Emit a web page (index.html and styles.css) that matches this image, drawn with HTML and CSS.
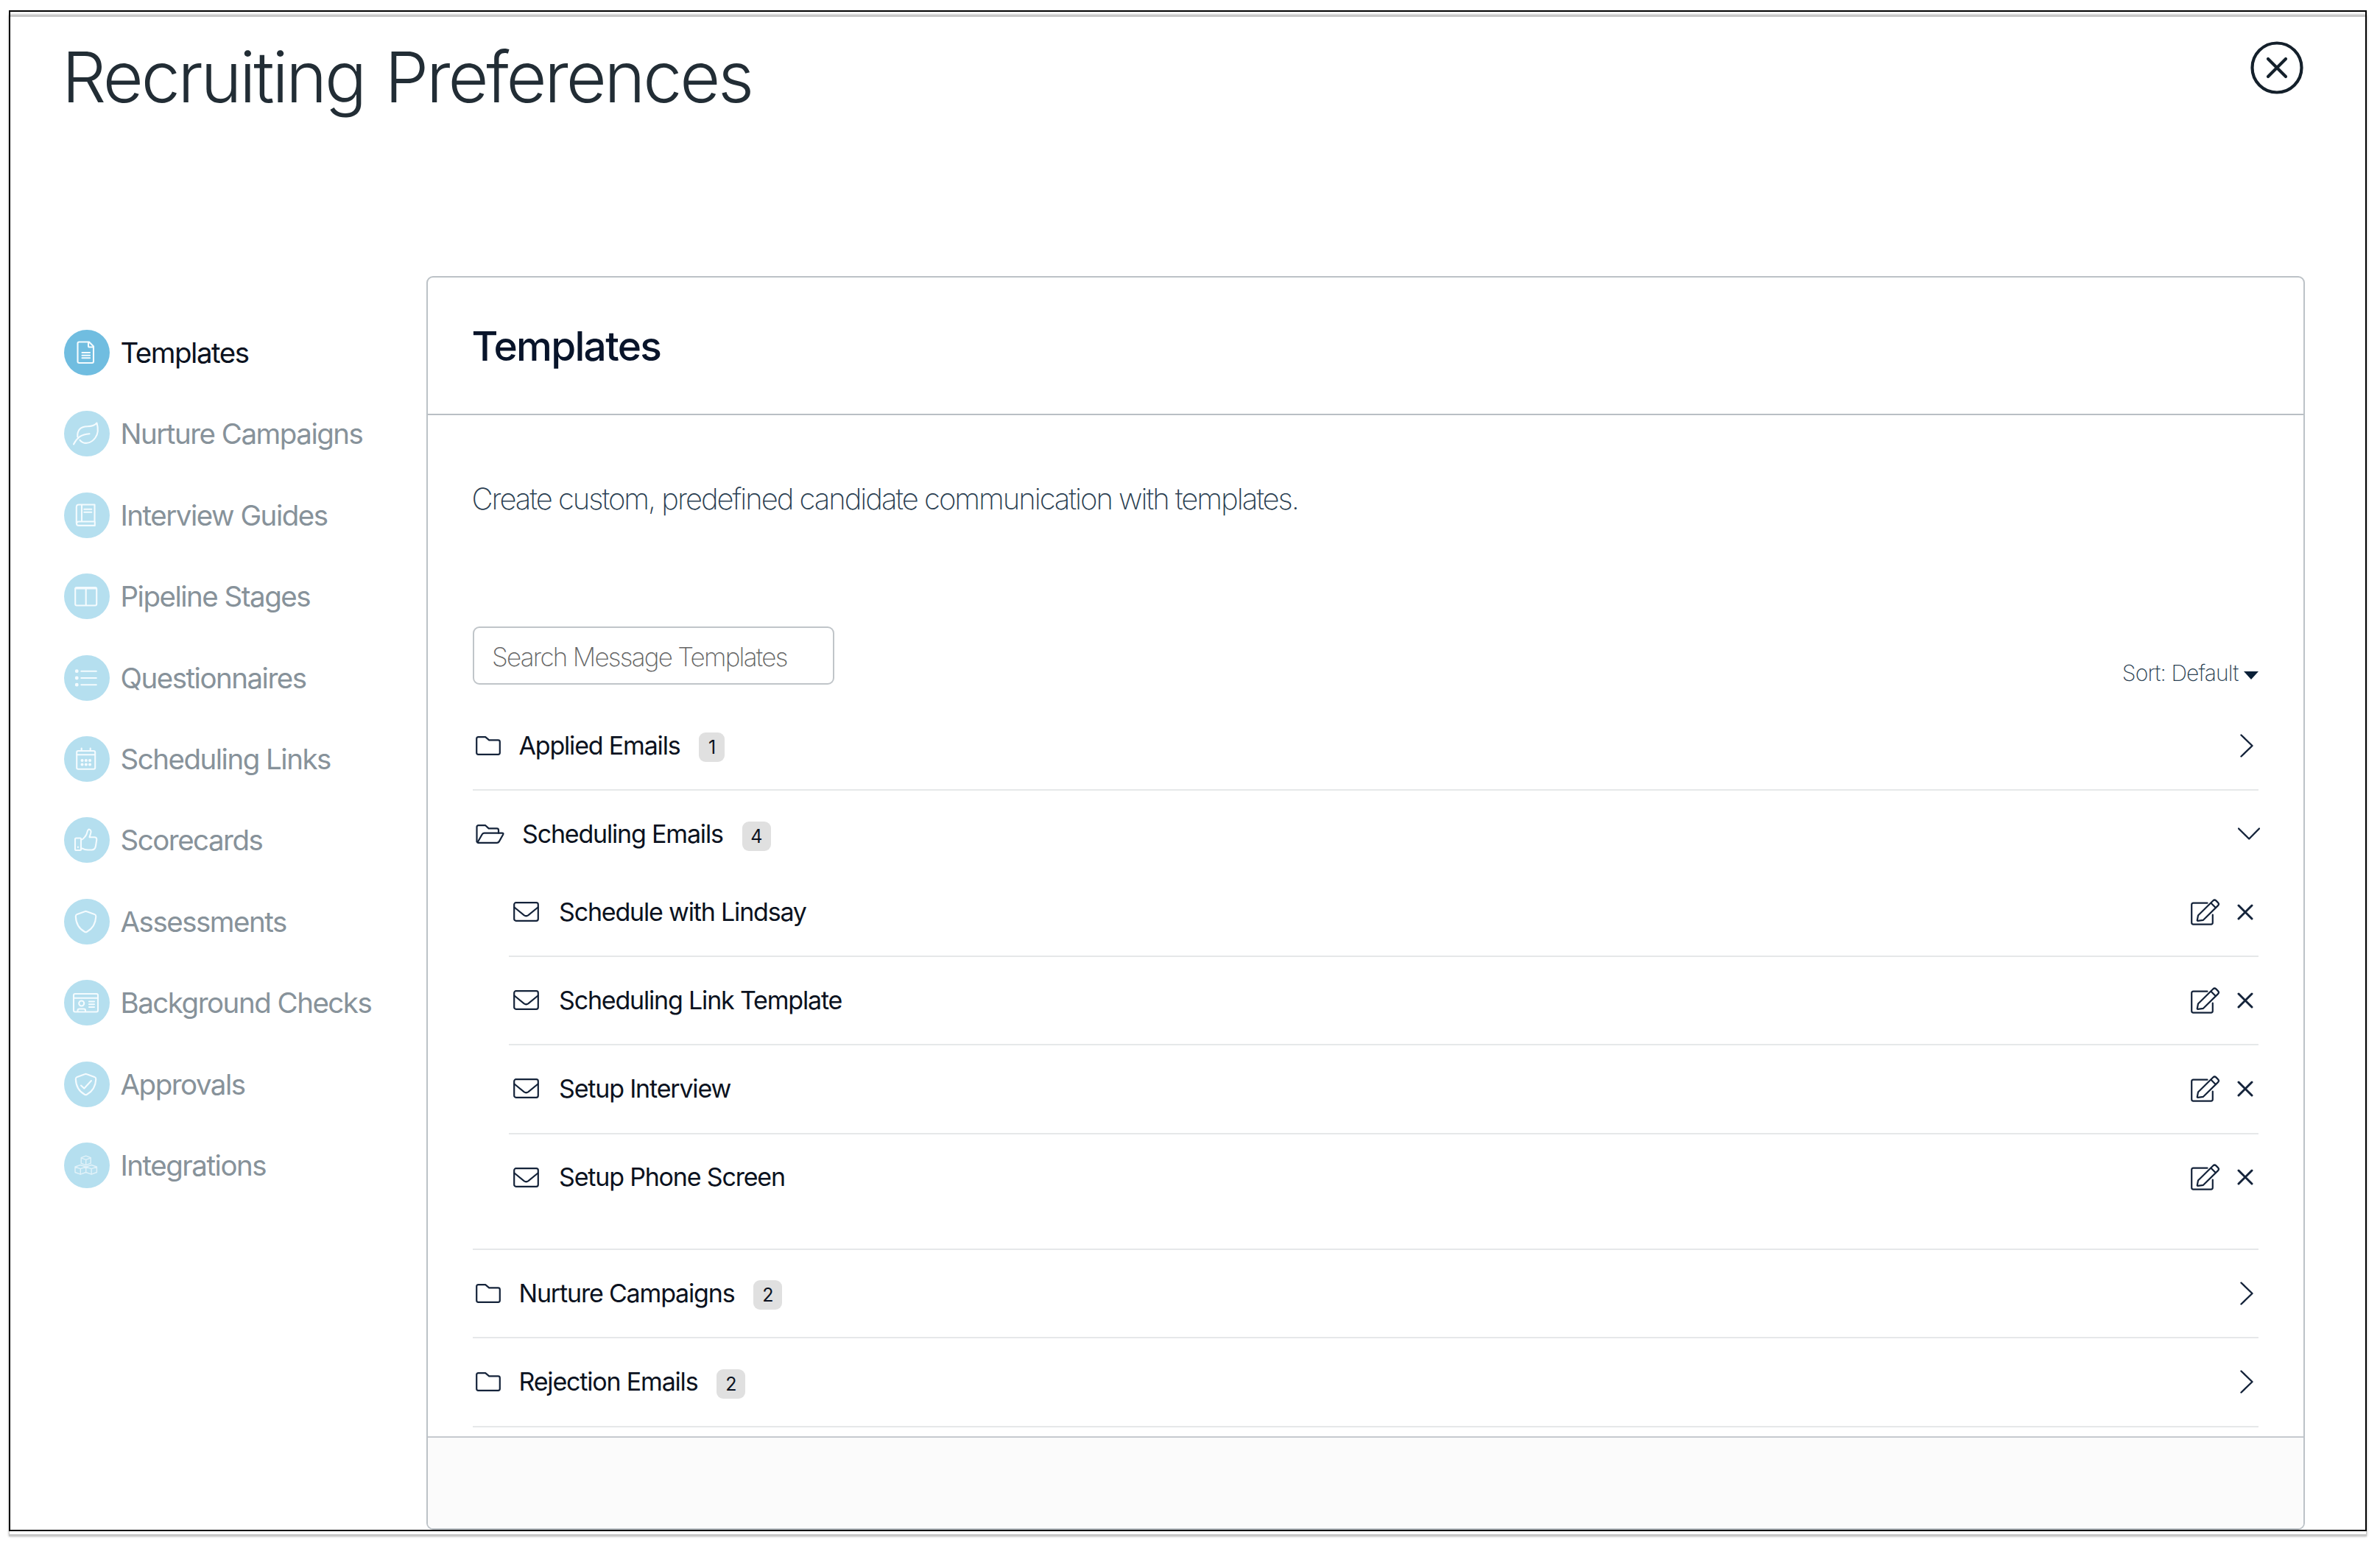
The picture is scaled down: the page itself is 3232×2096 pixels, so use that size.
FILE: index.html
```html
<!DOCTYPE html>
<html lang="en">
<head>
  <meta charset="UTF-8" />
  <title>Recruiting Preferences</title>
  <meta name="viewport" content="width=device-width, initial-scale=1.0" />
  <link rel="stylesheet" href="styles.css">
</head>
<body>

<!-- shared icons -->
<svg class="sprite" aria-hidden="true">
  <symbol id="folder" viewBox="0 0 34 26">
    <path d="M3.5 1.2h9.7l5 4.2h12.3q2.3 0 2.3 2.3v14.8q0 2.3-2.3 2.3h-27q-2.3 0-2.3-2.3V3.5q0-2.3 2.3-2.3z" />
  </symbol>
  <symbol id="folder-open" viewBox="0 0 39 26">
    <path d="M1.5 23.5V3.5q0-2.3 2.3-2.3h9.4l4.5 4.2h11q2.3 0 2.3 2.3v4" />
    <path d="M2.5 24.2l6.3-10.9q1-1.7 3-1.7h24q2.5 0 1.3 2.2l-5.3 9.3q-1 1.7-3 1.7H3.5q-1.5 0-1-.6z" />
  </symbol>
  <symbol id="mail" viewBox="0 0 35 27">
    <rect x="1.2" y="1.2" width="32.6" height="24.6" rx="2.5" />
    <path d="M1.5 7.5l13 10.6q3 2.3 6 0l13-10.6" />
  </symbol>
  <symbol id="edit" viewBox="0 0 40 36">
    <path d="M22.5 5.7H3.5q-2.3 0-2.3 2.3v24.3q0 2.3 2.3 2.3h24q2.3 0 2.3-2.3V21.5" />
    <path d="M10 22.5L30.3 2.5q2-2 4-.1l2.7 2.7q2 2 0 4L17 28.8l-7.5 1q-.8 0-.7-.8zM27.3 5.5l6.7 6.7" />
  </symbol>
  <symbol id="remove" viewBox="0 0 22 22">
    <path d="M2 2l18 18M20 2L2 20" />
  </symbol>
  <symbol id="right" viewBox="0 0 30 32">
    <path d="M6.5 1.5L21.5 16l-15 14.5" />
  </symbol>
  <symbol id="down" viewBox="0 0 30 32">
    <path d="M1 8.5L15.2 22.5 29 8.5" />
  </symbol>
</svg>

<div class="window">
  <header class="topbar">
    <h1>Recruiting Preferences</h1>
    <svg class="close" viewBox="0 0 72 72">
      <circle cx="36" cy="36" r="33.5" />
      <path d="M24 24l24 24M48 24L24 48" />
    </svg>
  </header>

  <div class="content">
    <nav class="sidebar">
      <a class="item active">
        <svg viewBox="0 0 62 62"><path d="M20.5 16.5h13.5l6 6v20.5q0 2-2 2h-17.5q-2 0-2-2v-24.5q0-2 2-2zM33 17v5q0 1.5 1.5 1.5h5M24.5 31h10.5M24.5 34.7h10.5M24.5 38.2h10.5" /></svg>
        <span>Templates</span>
      </a>
      <a class="item">
        <svg viewBox="0 0 62 62"><path d="M13 45.5q3-6.5 8.5-10.5 5-3.3 13-3.8M18.3 35.5q-1-14 13.5-14.3 9 0 12.7-4.7 3.5 12.5-2 20-4.5 6.5-11.5 7.3-6 .5-9.5-4" /></svg>
        <span>Nurture Campaigns</span>
      </a>
      <a class="item">
        <svg viewBox="0 0 62 62"><path d="M41.5 40V16.5h-21.5q-3.2 0-3.2 3.2v21.8M24 16.5v22.5M41.5 39.5h-21.5q-3 0-3 2.7t3 2.7h21.8v-5.2M27.3 22.7h10M27.3 26.8h10" /></svg>
        <span>Interview Guides</span>
      </a>
      <a class="item">
        <svg viewBox="0 0 62 62"><rect x="15.2" y="19" width="29" height="24.5" rx="2" /><path d="M15.5 20.5h28.5M29.7 20v23" /></svg>
        <span>Pipeline Stages</span>
      </a>
      <a class="item">
        <svg viewBox="0 0 62 62"><path class="dots" d="M17.2 21.7h.1M17.2 31h.1M17.2 40.2h.1" /><path d="M23.3 21.7h20.5M23.3 31h20.5M23.3 40.2h20.5" /></svg>
        <span>Questionnaires</span>
      </a>
      <a class="item">
        <svg viewBox="0 0 62 62"><rect x="17.2" y="20" width="25" height="24.7" rx="2" /><path d="M17.5 25.2h24.5M23.7 16.5v3.5M35.7 16.5v3.5" /><path class="dots small" d="M24.5 33h.1M29.8 33h.1M35 33h.1M24.5 38.5h.1M29.8 38.5h.1M35 38.5h.1" /></svg>
        <span>Scheduling Links</span>
      </a>
      <a class="item">
        <svg viewBox="0 0 62 62"><path d="M16.5 28.5h5.5q1 0 1 1v14.5q0 1-1 1h-5.5q-1.5 0-1.5-1.5v-13.5q0-1.5 1.5-1.5zM23 31q3-1 5.5-4.5 2.5-3 3-6.3.8-4 3-3.5 3.5 1 1 7.5l-1 3h6.5q3.5 0 3.3 3.5l-1.3 8.3q-.8 5.5-5.5 5.5h-5q-5 0-7-1.7l-2.500-.5M18.9 40.5v.5" /></svg>
        <span>Scorecards</span>
      </a>
      <a class="item">
        <svg viewBox="0 0 62 62"><path d="M28 17.2q1.5-.7 3 0l10.3 3.7q2 .8 2 3-.7 14.6-12.3 20.8-1.5.8-3 0-11.6-6.2-12.2-20.8 0-2.2 1.9-3z" /></svg>
        <span>Assessments</span>
      </a>
      <a class="item">
        <svg viewBox="0 0 62 62"><rect x="13" y="19" width="33" height="24.5" rx="2" /><path d="M13.5 24.7h32M18.5 43v-1.3q0-2.2 2.2-2.2h6.1q2.2 0 2.2 2.2v1.3M34 29.5h7M34 33.2h7M34 37h7" /><circle cx="23.7" cy="32" r="3.5" /></svg>
        <span>Background Checks</span>
      </a>
      <a class="item">
        <svg viewBox="0 0 62 62"><path d="M28 17.2q1.5-.7 3 0l10.3 3.7q2 .8 2 3-.7 14.6-12.3 20.8-1.5.8-3 0-11.6-6.2-12.2-20.8 0-2.2 1.9-3zM23 32.5l4.3 4L37 26" /></svg>
        <span>Approvals</span>
      </a>
      <a class="item">
        <svg class="faint" viewBox="0 0 62 62"><path d="M29.7 18.2l6.5 2.5v7.5l-6.5 2.7-6.5-2.7v-7.5zM23.2 20.9l6.5 2.5 6.5-2.5M29.7 23.4v7.5M22.3 30.5l7.4 2.5v7.5l-7.4 2.7-7.3-2.7v-7.5zM15 33.2l7.3 2.5 7.4-2.5M22.3 35.7v7.5M37.1 30.5l7.3 2.5v7.5l-7.3 2.7-7.4-2.7M29.7 33.2l7.4-2.7M29.7 33.2l7.4 2.5 7.3-2.5M37.1 35.7v7.5" /></svg>
        <span>Integrations</span>
      </a>
    </nav>

    <main class="card">
      <div class="card-header">
        <h2>Templates</h2>
      </div>

      <div class="card-body">
        <p class="intro">Create custom, predefined candidate communication with templates.</p>

        <div class="tools">
          <input type="text" class="search" placeholder="Search Message Templates" />
          <div class="sort"><span>Sort: Default</span><i class="caret"></i></div>
        </div>

        <div class="row">
          <svg class="folder"><use href="#folder" /></svg>
          <span class="name">Applied Emails</span>
          <span class="badge one">1</span>
          <svg class="chevron"><use href="#right" /></svg>
        </div>

        <div class="group">
          <div class="row open">
            <svg class="folder-open"><use href="#folder-open" /></svg>
            <span class="name">Scheduling Emails</span>
            <span class="badge">4</span>
            <svg class="chevron down"><use href="#down" /></svg>
          </div>
          <div class="children">
            <div class="row">
              <svg class="mail"><use href="#mail" /></svg>
              <span class="name">Schedule with Lindsay</span>
              <svg class="edit"><use href="#edit" /></svg>
              <svg class="remove"><use href="#remove" /></svg>
            </div>
            <div class="row">
              <svg class="mail"><use href="#mail" /></svg>
              <span class="name">Scheduling Link Template</span>
              <svg class="edit"><use href="#edit" /></svg>
              <svg class="remove"><use href="#remove" /></svg>
            </div>
            <div class="row">
              <svg class="mail"><use href="#mail" /></svg>
              <span class="name">Setup Interview</span>
              <svg class="edit"><use href="#edit" /></svg>
              <svg class="remove"><use href="#remove" /></svg>
            </div>
            <div class="row">
              <svg class="mail"><use href="#mail" /></svg>
              <span class="name">Setup Phone Screen</span>
              <svg class="edit"><use href="#edit" /></svg>
              <svg class="remove"><use href="#remove" /></svg>
            </div>
          </div>
        </div>

        <div class="row">
          <svg class="folder"><use href="#folder" /></svg>
          <span class="name">Nurture Campaigns</span>
          <span class="badge">2</span>
          <svg class="chevron"><use href="#right" /></svg>
        </div>
        <div class="row">
          <svg class="folder"><use href="#folder" /></svg>
          <span class="name">Rejection Emails</span>
          <span class="badge">2</span>
          <svg class="chevron"><use href="#right" /></svg>
        </div>
      </div>

      <div class="card-footer"></div>
    </main>
  </div>
</div>

</body>
</html>
```

FILE: styles.css
```css
* { box-sizing: border-box; }
body { margin: 0; height: 2096px; padding: 14px 0 0 12px; background: #fff; font-family: Inter, "Liberation Sans", sans-serif; color: #0b1220; }
h1, h2, p { margin: 0; }
svg { display: block; fill: none; stroke: #14233a; stroke-width: 2.2; stroke-linecap: round; stroke-linejoin: round; flex-shrink: 0; }
.sprite { position: absolute; width: 0; height: 0; }

.window { position: relative; width: 3202px; height: 2066px; }
/* black outline and its grey shadow line, drawn over the content */
.window::before, .window::after { content: ""; position: absolute; pointer-events: none; }
.window::before { inset: 6px 0 -7px 0; border: 3px solid #c8c8c8; border-width: 3px 1px; box-shadow: 0 0 3px rgba(0, 0, 0, 0.3); }
.window::after { inset: 0; border: 2px solid #000; }

.topbar { display: flex; justify-content: space-between; height: 361px; padding: 31px 86px 0 72px; }
h1 { font-size: 95px; line-height: 120px; font-weight: 350; letter-spacing: -3.2px; word-spacing: 4px; color: #222d35; }
.close { width: 72px; height: 72px; margin-top: 11px; stroke: #14202b; stroke-width: 4.2; }

.content { display: flex; }
.sidebar { display: flex; flex-direction: column; gap: 48.4px; width: 490px; padding: 73px 0 0 75px; }
.item { display: flex; align-items: center; gap: 14.5px; height: 62px; font-size: 38.5px; line-height: 60px; letter-spacing: -1.5px; color: #87929a; white-space: nowrap; }
.item svg { width: 62px; height: 62px; border-radius: 50%; background: #b5dfef; stroke: #f4fbfe; stroke-width: 2.1; }
.item.active { color: #0b1220; }
.item.active svg { background: #70bde0; }
.item .dots { stroke-width: 4.8; }
.item .small { stroke-width: 4; }
.item .faint { stroke: #e2f2f9; stroke-width: 1.4; }

.card { width: 2551.5px; height: 1703px; margin-left: 76.5px; border: 2px solid #bcc2c7; border-radius: 9px; display: flex; flex-direction: column; overflow: hidden; flex-shrink: 0; }
.card-header { height: 187px; padding: 63px 60px 0; border-bottom: 2px solid #b9bfc4; }
h2 { font-size: 55px; line-height: 60px; font-weight: 480; letter-spacing: -1.7px; color: #08142a; }
.card-body { height: 1387px; padding: 84px 61.5px 0; }
.intro { margin-left: -1.5px; font-size: 40px; line-height: 60px; font-weight: 200; letter-spacing: -2.03px; color: #2b3f52; }

.tools { display: flex; justify-content: space-between; margin-top: 143px; height: 103px; }
.search { width: 491px; height: 79px; padding: 3px 24px 0; border: 2.5px solid #c0c5c9; border-radius: 9px; font: 200 35px Inter, sans-serif; letter-spacing: -1.75px; background: #fff; }
.search::placeholder { color: #666; opacity: 1; }
.sort { display: flex; align-items: center; gap: 7px; height: 40px; margin-top: 43px; font-size: 30px; font-weight: 200; letter-spacing: -0.86px; color: #2b3f52; }
.caret { border: 10px solid transparent; border-top: 11px solid #0a2037; border-bottom: 0; margin-top: 6px; }

.row { display: flex; align-items: center; height: 120.4px; padding: 0 0 1px 4px; border-bottom: 2px solid #e6e8e9; }
.name { margin-left: 24.5px; font-size: 34px; line-height: 50px; letter-spacing: -1.18px; }
.badge { width: 39px; height: 40px; margin: 5px auto 0 26px; border-radius: 9px; background: #e0e0e0; font-size: 25px; line-height: 41px; text-align: center; }
.badge.one { width: 35px; }
.folder { width: 34px; height: 26px; }
.folder-open { width: 39px; height: 26px; }
.mail { width: 35px; height: 27px; }
.chevron { width: 30px; height: 32px; margin-right: -0.5px; stroke-width: 2.4; }
.chevron.down { margin-right: -2px; }

.row.open { height: 105.6px; padding-top: 12px; padding-bottom: 0; border: 0; }
.row.open .name { margin-left: 24px; }
.group { height: 623.6px; border-bottom: 2px solid #e6e8e9; }
.children { margin-left: 49px; }
.children .row { height: 120.2px; padding-left: 6px; }
.children .row:last-child { border: 0; padding-bottom: 3px; }
.children .name { margin-right: auto; margin-left: 27px; }
.edit { width: 40px; height: 36px; margin-right: 23px; }
.remove { width: 22px; height: 22px; margin-right: 6.5px; stroke-width: 3; }

.card-footer { flex: 1; background: #fbfbfb; border-top: 2.5px solid #c6cacf; }
```
